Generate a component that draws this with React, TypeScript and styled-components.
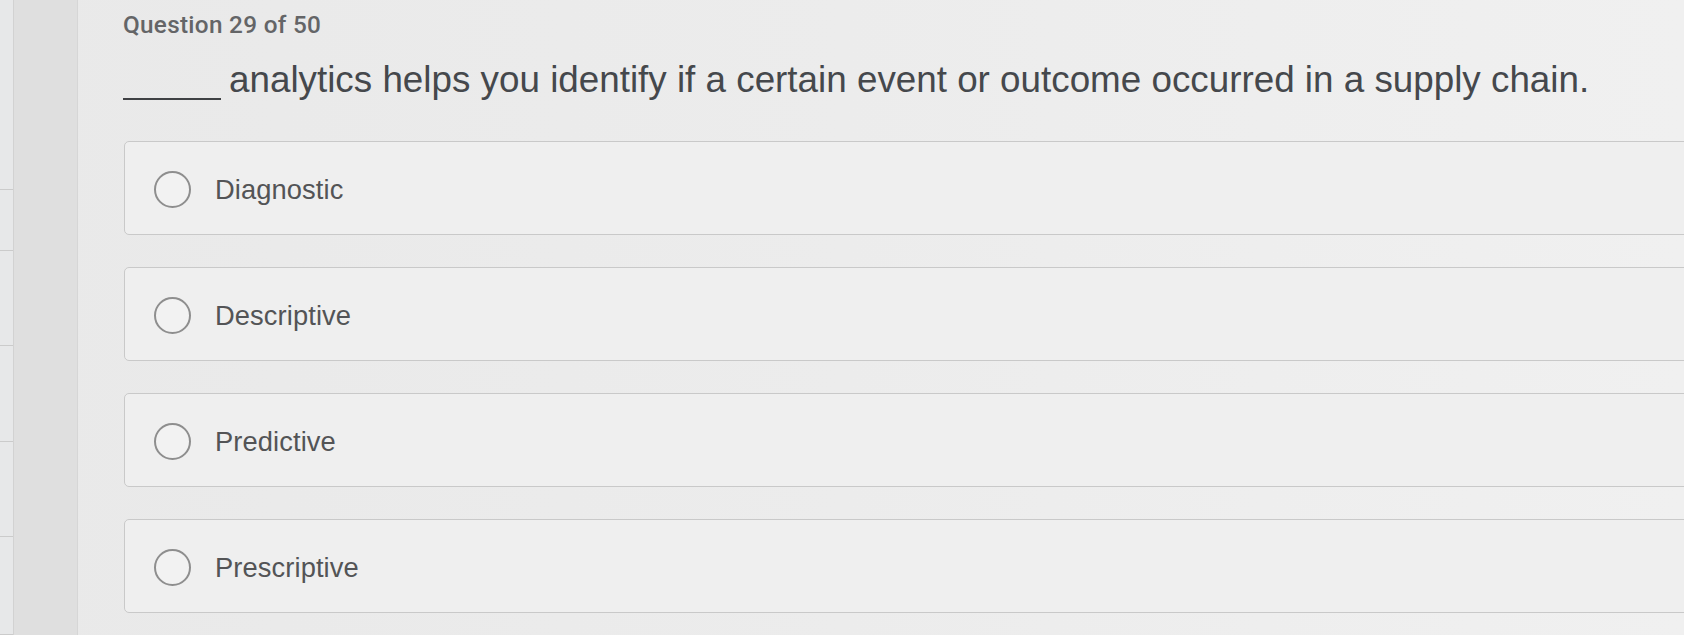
import React from "react";
import styled, { createGlobalStyle } from "styled-components";

const GlobalStyle = createGlobalStyle`
  html, body {
    margin: 0;
    padding: 0;
    width: 100%;
    height: 100%;
    overflow: hidden;
    background: #ebebeb;
  }
  body {
    font-family: "Liberation Sans", Arial, Helvetica, sans-serif;
  }
  #root {
    height: 100%;
  }
`;

const Page = styled.div`
  display: flex;
  height: 635px;
  width: 1684px;
  background: linear-gradient(90deg, #e9e9e9 0%, #ececec 50%, #f0f0f0 100%);
`;

const SideList = styled.div`
  width: 13px;
  display: flex;
  flex-direction: column;
  background: #e7e8e9;
  border-right: 1px solid #d2d2d2;
  flex-shrink: 0;
`;

const SideItem = styled.div<{ $h: number }>`
  height: ${(p) => p.$h}px;
  border-bottom: 1px solid #cbcbcb;
  box-sizing: border-box;
  flex-shrink: 0;
`;

const SideColumn = styled.div`
  width: 63px;
  background: #dfdfdf;
  border-right: 1px solid #d6d6d6;
  flex-shrink: 0;
`;

const Main = styled.main`
  flex: 1;
  min-width: 0;
  overflow: hidden;
  padding: 10px 0 0 45px;
  box-sizing: border-box;
`;

const Counter = styled.div`
  font-family: Roboto, "Liberation Sans", Arial, sans-serif;
  font-size: 24.3px;
  line-height: 29px;
  font-weight: 500;
  color: #646567;
  letter-spacing: 0.3px;
`;

const Question = styled.h1`
  margin: 19px 0 0 0;
  font-size: 36.8px;
  line-height: 44px;
  font-weight: 400;
  color: #45484c;
  white-space: nowrap;
`;

const Blank = styled.span`
  display: inline-block;
  width: 98px;
  height: 37px;
  border-bottom: 2.5px solid #3f4144;
  margin-right: 8px;
  vertical-align: -8px;
  box-sizing: border-box;
`;

const Options = styled.div`
  margin: 39px -12px 0 1px;
  display: flex;
  flex-direction: column;
  gap: 32px;
`;

const OptionCard = styled.label`
  display: flex;
  align-items: center;
  height: 94px;
  box-sizing: border-box;
  padding: 3px 0 0 29px;
  border: 1.5px solid #c9c9c9;
  border-radius: 5px;
  background: #efefef;
  cursor: pointer;
`;

const Radio = styled.span`
  width: 37px;
  height: 37px;
  box-sizing: border-box;
  border: 2px solid #8e8e8e;
  border-radius: 50%;
  background: #f2f2f2;
  flex-shrink: 0;
`;

const OptionText = styled.span`
  margin-left: 24px;
  font-size: 27.3px;
  color: #535456;
  letter-spacing: 0.1px;
`;

const sideHeights = [190, 61, 95, 96, 95, 98];
const options = ["Diagnostic", "Descriptive", "Predictive", "Prescriptive"];

export default function App() {
  return (
    <>
      <GlobalStyle />
      <Page>
        <SideList>
          {sideHeights.map((h, i) => (
            <SideItem key={i} $h={h} />
          ))}
        </SideList>
        <SideColumn />
        <Main>
          <Counter>Question 29 of 50</Counter>
          <Question>
            <Blank />
            analytics helps you identify if a certain event or outcome occurred in a supply chain.
          </Question>
          <Options>
            {options.map((o) => (
              <OptionCard key={o}>
                <Radio />
                <OptionText>{o}</OptionText>
              </OptionCard>
            ))}
          </Options>
        </Main>
      </Page>
    </>
  );
}
